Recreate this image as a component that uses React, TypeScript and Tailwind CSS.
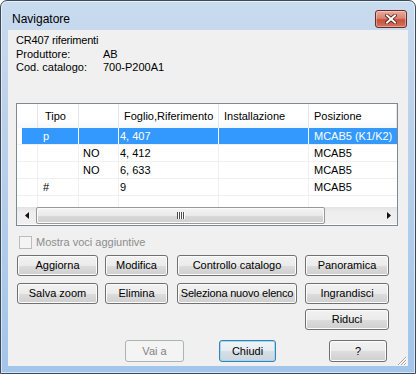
import React from 'react';

interface Row {
  tipo: string;
  flag: string;
  foglio: string;
  inst: string;
  pos: string;
  selected?: boolean;
}

const rows: Row[] = [
  { tipo: 'p', flag: '', foglio: '4, 407', inst: '', pos: 'MCAB5 (K1/K2)', selected: true },
  { tipo: '', flag: 'NO', foglio: '4, 412', inst: '', pos: 'MCAB5' },
  { tipo: '', flag: 'NO', foglio: '6, 633', inst: '', pos: 'MCAB5' },
  { tipo: '#', flag: '', foglio: '9', inst: '', pos: 'MCAB5' },
];

// pulsante stile Windows 7
const btn =
  'h-[21px] shrink-0 rounded-[3px] border border-[#707070] bg-[linear-gradient(to_bottom,#f2f2f2_0%,#ebebeb_50%,#dddddd_51%,#cfcfcf_100%)] shadow-[inset_0_0_0_1px_#fcfcfc] flex items-center justify-center whitespace-nowrap text-black';

function Button({ label, w, className = '' }: { label: string; w: string; className?: string }) {
  return <div className={`${btn} ${w} ${className}`}>{label}</div>;
}

function CloseButton() {
  return (
    <div className="mt-[9px] w-[32px] h-[18px] rounded-[3px] border border-[#6e2a22] bg-[linear-gradient(to_bottom,#e9aa9e_0%,#d98473_45%,#c8503c_55%,#d2745e_100%)] shadow-[inset_0_0_0_1px_rgba(255,255,255,0.35)] flex items-center justify-center">
      <svg width="12" height="10" viewBox="0 0 12 10">
        <path d="M2 1.5 L10 8.5 M10 1.5 L2 8.5" stroke="#4a1a14" strokeWidth="3.6" strokeLinecap="square" />
        <path d="M2 1.5 L10 8.5 M10 1.5 L2 8.5" stroke="#ffffff" strokeWidth="2" strokeLinecap="square" />
      </svg>
    </div>
  );
}

function ListRow({ r }: { r: Row }) {
  const sel = r.selected;
  const line = sel ? 'border-white' : 'border-[#f0f0f0]';
  const cellBg = sel ? 'bg-[#3399ff] text-white' : '';
  return (
    <div className="flex h-[17px] border-b border-[#f0f0f0] leading-[16px] whitespace-nowrap">
      <div className={`w-[21px] shrink-0 ${sel ? '' : 'border-r border-[#f0f0f0]'}`}>
        {sel && <div className="ml-[5px] h-full bg-[#3399ff]" />}
      </div>
      <div className={`w-[41px] shrink-0 border-r pl-[5px] ${line} ${cellBg}`}>{r.tipo}</div>
      <div className={`w-[40px] shrink-0 border-r pl-[4px] ${line} ${cellBg}`}>{r.flag}</div>
      <div className={`w-[100px] shrink-0 border-r pl-[1px] ${line} ${cellBg}`}>{r.foglio}</div>
      <div className={`w-[90px] shrink-0 border-r pl-[5px] ${line} ${cellBg}`}>{r.inst}</div>
      <div className={`flex-1 pl-[5px] ${cellBg}`}>{r.pos}</div>
    </div>
  );
}

function ListView() {
  const head = 'h-[24px] shrink-0 flex items-center border-r border-[#e5e5e5]';
  return (
    <div className="mt-[29px] w-[382px] h-[123px] border border-[#828790] bg-white flex flex-col overflow-hidden">
      {/* intestazione */}
      <div className="flex bg-[linear-gradient(to_bottom,#ffffff_0%,#ffffff_60%,#f6f7f9_100%)] whitespace-nowrap">
        <div className={`${head} w-[21px]`} />
        <div className={`${head} w-[41px] pl-[7px]`}>Tipo</div>
        <div className={`${head} w-[40px]`} />
        <div className={`${head} w-[100px] pl-[5px]`}>Foglio,Riferimento</div>
        <div className={`${head} w-[90px] pl-[5px]`}>Installazione</div>
        <div className="h-[24px] flex-1 flex items-center pl-[5px] border-r border-[#e5e5e5]">Posizione</div>
      </div>
      {rows.map((r, i) => (
        <ListRow key={i} r={r} />
      ))}
      {/* riga vuota parziale */}
      <div className="flex h-[11px]">
        <div className="w-[21px] shrink-0 border-r border-[#f0f0f0]" />
        <div className="w-[41px] shrink-0 border-r border-[#f0f0f0]" />
        <div className="w-[40px] shrink-0 border-r border-[#f0f0f0]" />
        <div className="w-[100px] shrink-0 border-r border-[#f0f0f0]" />
        <div className="w-[90px] shrink-0 border-r border-[#f0f0f0]" />
        <div className="flex-1" />
      </div>
      {/* barra di scorrimento orizzontale */}
      <div className="flex h-[17px] bg-[linear-gradient(to_bottom,#e3e3e3_0%,#eeeeee_30%,#f0f0f0_100%)]">
        <div className="w-[19px] shrink-0 flex items-center justify-center">
          <svg width="4" height="7" viewBox="0 0 4 7">
            <path d="M4 0 L0 3.5 L4 7 Z" fill="#111" />
          </svg>
        </div>
        <div className="w-[289px] shrink-0 rounded-[2px] border border-[#989898] bg-[linear-gradient(to_bottom,#f4f4f4_0%,#e9e9e9_50%,#d9d9d9_51%,#d0d0d0_100%)] shadow-[inset_0_0_0_1px_#fbfbfb] flex items-center justify-center">
          <svg width="8" height="7" viewBox="0 0 8 7">
            <path d="M0.5 0 V7 M2.5 0 V7 M4.5 0 V7 M6.5 0 V7" stroke="#4d4d4d" strokeWidth="1" />
            <path d="M1.5 0 V7 M3.5 0 V7 M5.5 0 V7 M7.5 0 V7" stroke="#ffffff" strokeWidth="1" />
          </svg>
        </div>
        <div className="flex-1" />
        <div className="w-[17px] shrink-0 flex items-center justify-center">
          <svg width="4" height="7" viewBox="0 0 4 7">
            <path d="M0 0 L4 3.5 L0 7 Z" fill="#111" />
          </svg>
        </div>
      </div>
      <div className="h-[1px]" />
    </div>
  );
}

export default function App() {
  return (
    <div className="w-[416px] h-[374px] rounded-t-[7px] border border-[#3e4a57] bg-[linear-gradient(to_bottom,#c9dbee_0%,#bcd2eb_30%,#aecbea_70%,#a2c5ea_100%)] shadow-[inset_0_0_0_1px_rgba(255,255,255,0.55)] flex flex-col font-['Liberation_Sans',Arial,sans-serif] text-[11px] text-black">
      {/* barra del titolo */}
      <div className="h-[29px] shrink-0 flex justify-between pl-[11px] pr-[8px]">
        <div className="mt-[11px] text-[12px] leading-[15px]">Navigatore</div>
        <CloseButton />
      </div>

      {/* area client */}
      <div className="relative mx-[7px] w-[400px] h-[336px] bg-[#f0f0f0] pl-[8px] flex flex-col">
        <div className="pt-[4px] leading-[13px]">
          <div className="tracking-[-0.2px]">CR407 riferimenti</div>
          <div className="mt-[1px] flex">
            <span className="w-[87px]">Produttore:</span>
            <span>AB</span>
          </div>
          <div className="flex">
            <span className="w-[87px]">Cod. catalogo:</span>
            <span>700-P200A1</span>
          </div>
        </div>

        <ListView />

        <div className="mt-[10px] ml-[3px] flex items-center h-[13px]">
          <div className="w-[13px] h-[13px] border border-[#bcbcbc] bg-[#f4f4f4]" />
          <span className="ml-[4px] text-[#8d8d8d]">Mostra voci aggiuntive</span>
        </div>

        <div className="mt-[6px] ml-[1px] flex">
          <Button label="Aggiorna" w="w-[81px]" />
          <Button label="Modifica" w="w-[63px]" className="ml-[7px]" />
          <Button label="Controllo catalogo" w="w-[120px]" className="ml-[9px]" />
          <Button label="Panoramica" w="w-[84px]" className="ml-[8px]" />
        </div>
        <div className="mt-[7px] ml-[1px] flex">
          <Button label="Salva zoom" w="w-[81px]" />
          <Button label="Elimina" w="w-[63px]" className="ml-[7px]" />
          <Button label="Seleziona nuovo elenco" w="w-[120px]" className="ml-[9px] tracking-[-0.2px]" />
          <Button label="Ingrandisci" w="w-[84px]" className="ml-[8px]" />
        </div>
        <div className="mt-[5px] ml-[289px] flex">
          <Button label="Riduci" w="w-[84px]" />
        </div>

        <div className="mt-[10px] flex">
          <div className="ml-[109px] w-[59px] h-[22px] rounded-[3px] border border-[#adb2b5] bg-[#f4f4f4] text-[#838383] flex items-center justify-center">
            Vai a
          </div>
          <div className="ml-[35px] w-[57px] h-[22px] rounded-[3px] border border-[#3c7fb1] bg-[linear-gradient(to_bottom,#eef3f6_0%,#e6ecf0_50%,#d6dfe5_51%,#cbd6de_100%)] shadow-[inset_0_0_0_1px_#9fd9f6] flex items-center justify-center">
            Chiudi
          </div>
          <Button label="?" w="w-[58px] h-[22px]" className="ml-[53px]" />
        </div>

        {/* maniglia di ridimensionamento */}
        <svg className="absolute right-0 bottom-0" width="12" height="12" viewBox="0 0 12 12">
          <path d="M11 3 L3 11 M11 6 L6 11 M11 9 L9 11" stroke="#ffffff" strokeWidth="1" />
          <path d="M10 3 L2 11 M10 6 L5 11 M10 9 L8 11" stroke="#a7a7a7" strokeWidth="1" />
        </svg>
      </div>
    </div>
  );
}
